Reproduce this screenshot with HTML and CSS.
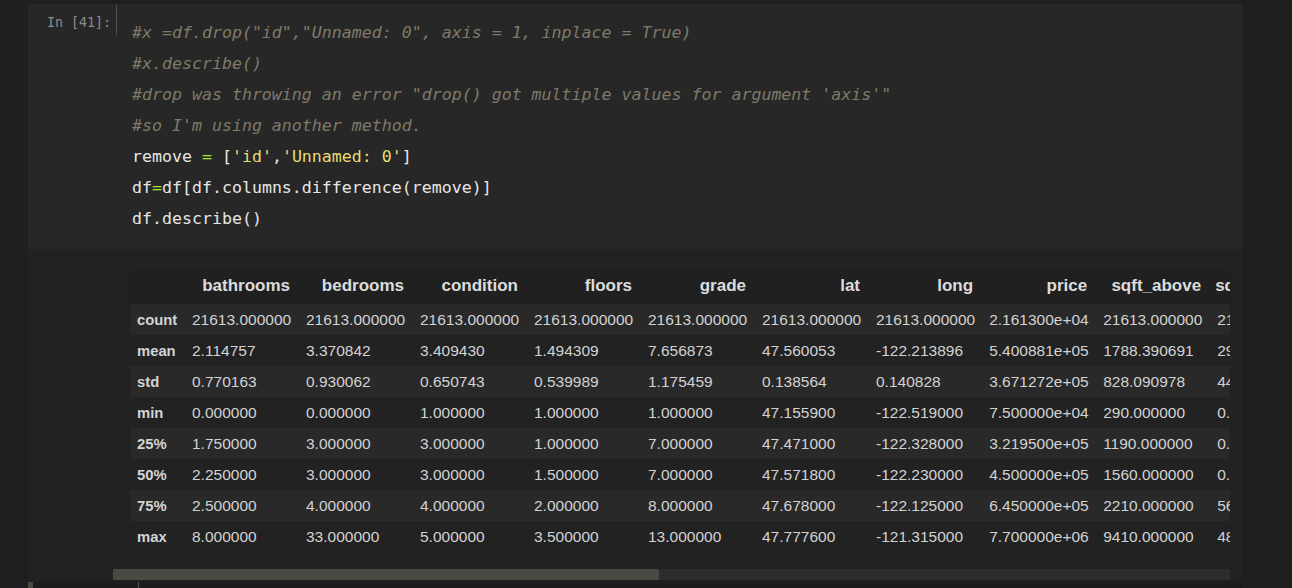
FILE: index.html
```html
<!DOCTYPE html>
<html>
<head>
<meta charset="utf-8">
<link rel="stylesheet" href="styles.css">
</head>
<body>
<div class="notebook">
  <div class="cell">
    <div class="input">
      <div class="prompt">In&nbsp;[41]:</div>
      <div class="gutter-line"></div>
      <pre class="code"><span class="c">#x =df.drop("id","Unnamed: 0", axis = 1, inplace = True)</span>
<span class="c">#x.describe()</span>
<span class="c">#drop was throwing an error "drop() got multiple values for argument 'axis'"</span>
<span class="c">#so I'm using another method.</span>
remove <span class="o">=</span> [<span class="s">'id'</span>,<span class="s">'Unnamed: 0'</span>]
df<span class="o">=</span>df[df.columns.difference(remove)]
df.describe()</pre>
    </div>
    <div class="output">
      <div class="out-prompt"></div>
      <div class="out-area">
        <div class="table-wrap">
          <table class="df">
            <thead>
              <tr><th class="blank"></th><th>bathrooms</th><th>bedrooms</th><th>condition</th><th>floors</th><th>grade</th><th>lat</th><th>long</th><th>price</th><th>sqft_above</th><th>sqft_basement</th></tr>
            </thead>
            <tbody>
              <tr><th>count</th><td>21613.000000</td><td>21613.000000</td><td>21613.000000</td><td>21613.000000</td><td>21613.000000</td><td>21613.000000</td><td>21613.000000</td><td>2.161300e+04</td><td>21613.000000</td><td>21613.000000</td></tr>
              <tr><th>mean</th><td>2.114757</td><td>3.370842</td><td>3.409430</td><td>1.494309</td><td>7.656873</td><td>47.560053</td><td>-122.213896</td><td>5.400881e+05</td><td>1788.390691</td><td>291.509045</td></tr>
              <tr><th>std</th><td>0.770163</td><td>0.930062</td><td>0.650743</td><td>0.539989</td><td>1.175459</td><td>0.138564</td><td>0.140828</td><td>3.671272e+05</td><td>828.090978</td><td>442.575043</td></tr>
              <tr><th>min</th><td>0.000000</td><td>0.000000</td><td>1.000000</td><td>1.000000</td><td>1.000000</td><td>47.155900</td><td>-122.519000</td><td>7.500000e+04</td><td>290.000000</td><td>0.000000</td></tr>
              <tr><th>25%</th><td>1.750000</td><td>3.000000</td><td>3.000000</td><td>1.000000</td><td>7.000000</td><td>47.471000</td><td>-122.328000</td><td>3.219500e+05</td><td>1190.000000</td><td>0.000000</td></tr>
              <tr><th>50%</th><td>2.250000</td><td>3.000000</td><td>3.000000</td><td>1.500000</td><td>7.000000</td><td>47.571800</td><td>-122.230000</td><td>4.500000e+05</td><td>1560.000000</td><td>0.000000</td></tr>
              <tr><th>75%</th><td>2.500000</td><td>4.000000</td><td>4.000000</td><td>2.000000</td><td>8.000000</td><td>47.678000</td><td>-122.125000</td><td>6.450000e+05</td><td>2210.000000</td><td>560.000000</td></tr>
              <tr><th>max</th><td>8.000000</td><td>33.000000</td><td>5.000000</td><td>3.500000</td><td>13.000000</td><td>47.777600</td><td>-121.315000</td><td>7.700000e+06</td><td>9410.000000</td><td>4820.000000</td></tr>
            </tbody>
          </table>
        </div>
        <div class="scrollbar"><div class="thumb"></div></div>
      </div>
    </div>
  </div>
  <div class="next-cell">
    <div class="next-mark"></div>
    <div class="next-body"><div class="next-tick"></div></div>
  </div>
</div>
</body>
</html>
```

FILE: styles.css
```css
html, body {
  margin: 0;
  padding: 0;
  background: #1f1f1f;
}

.notebook {
  padding-top: 4px;
  padding-left: 28px;
  width: 1214px;
}

.input {
  display: flex;
  height: 245px;
  background: #272727;
}

.prompt {
  width: 83px;
  padding-right: 5px;
  padding-top: 10px;
  text-align: right;
  font-family: "DejaVu Sans Mono", monospace;
  font-size: 13.3px;
  line-height: 17px;
  color: #8c8c8c;
  flex: none;
}

.gutter-line {
  width: 1px;
  height: 30px;
  margin-top: 1px;
  background: #505050;
  flex: none;
}

.code {
  margin: 0;
  padding: 13px 0 0 15px;
  font-family: "DejaVu Sans Mono", monospace;
  font-size: 16.6px;
  line-height: 31px;
  color: #e6e6e6;
  white-space: pre;
}

.code .c {
  color: #7f7a68;
  font-style: italic;
}

.code .o {
  color: #a6e22e;
}

.code .s {
  color: #e6db74;
}

.output {
  display: flex;
  height: 331px;
  background: #222222;
}

.out-prompt {
  width: 85px;
  flex: none;
}

.out-area {
  width: 1117px;
  flex: none;
}

.table-wrap {
  overflow: hidden;
  padding: 19px 0 0 17px;
}

.df {
  width: max-content;
  border-collapse: collapse;
  border-spacing: 0;
  font-family: "Liberation Sans", Arial, sans-serif;
  white-space: nowrap;
}

.df thead th {
  background: #202020;
  height: 36px;
  width: 100px;
  padding: 0 9px 0 5px;
  font-size: 17px;
  font-weight: bold;
  color: #dcdcdc;
  text-align: right;
}

.df thead th.blank {
  width: 41px;
  padding: 0 7px;
}

.df thead th:nth-child(8) {
  width: 98px;
}

.df tbody tr {
  background: #222222;
}

.df tbody tr:nth-child(odd) {
  background: #292929;
}

.df tbody th {
  height: 31px;
  padding: 0 7px;
  font-size: 14.8px;
  font-weight: bold;
  color: #d4d4d4;
  text-align: left;
}

.df td {
  height: 31px;
  width: 100px;
  padding: 0 7px;
  font-size: 15.5px;
  color: #d2d2d2;
  text-align: left;
}

.df td:nth-child(8) {
  width: 98px;
}

.scrollbar {
  margin-top: 17px;
  height: 11px;
  background: #2d2d2d;
}

.thumb {
  width: 546px;
  height: 11px;
  background: #4a4a42;
  border-radius: 2px;
}

.next-cell {
  display: flex;
  margin-top: 2px;
  height: 6px;
}

.next-mark {
  width: 5px;
  background: #4a4a42;
}

.next-body {
  flex: 1;
  background: #1c1c1c;
  padding-left: 105px;
}

.next-tick {
  width: 1px;
  height: 6px;
  background: #555555;
}
```
